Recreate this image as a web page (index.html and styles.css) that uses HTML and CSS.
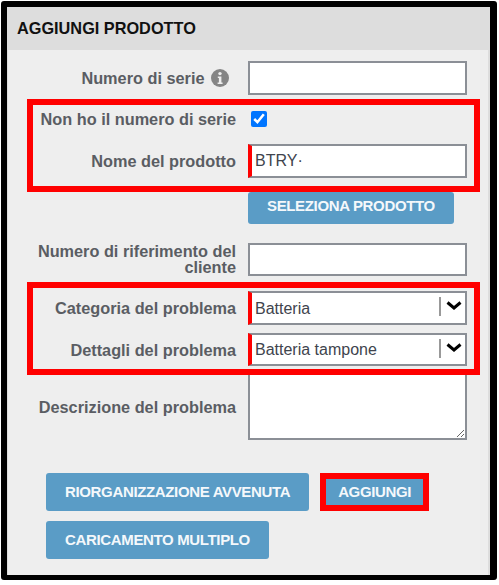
FILE: index.html
```html
<!DOCTYPE html>
<html lang="en">
<head>
    <meta charset="UTF-8">
    <title>Aggiungi prodotto</title>
    <link rel="stylesheet" href="styles.css">
</head>
<body>
    <div class="frame">
        <div class="panel">
            <h3 class="panel-title">AGGIUNGI PRODOTTO</h3>
            <form class="product-form">
                <div class="row">
                    <label class="row-label">
                        Numero di serie
                        <svg class="info-icon" viewBox="0 0 18 18" width="18" height="18">
                            <circle cx="9" cy="9" r="9" fill="#858585"/>
                            <circle cx="9" cy="4.6" r="1.7" fill="#eee"/>
                            <path d="M6.8 7.4h3.6v6.2h1.2v1.5H6.6v-1.5h1.3V8.9H6.8z" fill="#eee"/>
                        </svg>
                    </label>
                    <input class="text-input" type="text">
                </div>

                <div class="highlight highlight-top">
                    <div class="row row-check">
                        <label class="row-label">Non ho il numero di serie</label>
                        <input class="check" type="checkbox" checked>
                    </div>
                    <div class="row">
                        <label class="row-label">Nome del prodotto</label>
                        <input class="text-input required" type="text" value="BTRY·">
                    </div>
                </div>

                <div class="row">
                    <span></span>
                    <div class="field-btn"><button type="button" class="btn">SELEZIONA PRODOTTO</button></div>
                </div>

                <div class="row row-ref">
                    <label class="row-label">Numero di riferimento del cliente</label>
                    <input class="text-input" type="text">
                </div>

                <div class="highlight highlight-problem">
                    <div class="row">
                        <label class="row-label">Categoria del problema</label>
                        <div class="select-box">
                            <select class="select required">
                                <option>Batteria</option>
                            </select>
                            <svg class="chevron" viewBox="0 0 16 9" width="16" height="9">
                                <path d="M1.5 1.5 8 7l6.5-5.5" fill="none" stroke="#000" stroke-width="3"/>
                            </svg>
                        </div>
                    </div>
                    <div class="row row-detail">
                        <label class="row-label">Dettagli del problema</label>
                        <div class="select-box">
                            <select class="select required">
                                <option>Batteria tampone</option>
                            </select>
                            <svg class="chevron" viewBox="0 0 16 9" width="16" height="9">
                                <path d="M1.5 1.5 8 7l6.5-5.5" fill="none" stroke="#000" stroke-width="3"/>
                            </svg>
                        </div>
                    </div>
                </div>

                <div class="row row-desc">
                    <label class="row-label">Descrizione del problema</label>
                    <textarea class="text-area"></textarea>
                </div>

                <div class="actions">
                    <button type="button" class="btn btn-large">RIORGANIZZAZIONE AVVENUTA</button>
                    <button type="button" class="btn btn-large btn-marked">AGGIUNGI</button>
                    <button type="button" class="btn btn-large">CARICAMENTO MULTIPLO</button>
                </div>
            </form>
        </div>
    </div>
</body>
</html>
```

FILE: styles.css
```css
body {
    margin: 0;
    background-color: #fff;
    font-family: "Liberation Sans", Arial, sans-serif;
}
.frame {
    width: 496px;
    box-sizing: border-box;
    margin: 1px 0 0 1px;
    border: solid #000;
    border-width: 6px 7px 5px 6px;
    border-radius: 3px;
}
.panel {
    background-color: #eee;
    border: solid #ddd;
    border-width: 1px 2px 0 1px;
}
.panel-title {
    margin: 0;
    height: 42px;
    padding-left: 9px;
    background-color: #ddd;
    color: #111;
    font-size: 16.3px;
    line-height: 41px;
}
.product-form {
    padding: 11px 21px 16px 19px;
}
.row {
    display: grid;
    grid-template-columns: 1fr 219px;
    column-gap: 12px;
    align-items: center;
}
.row-label {
    color: #5a5d63;
    font-size: 16.3px;
    font-weight: bold;
    line-height: 16px;
    text-align: right;
}
.info-icon {
    margin: 0 7px 0 2px;
    vertical-align: -3px;
}
.text-input, .select, .text-area {
    box-sizing: border-box;
    width: 100%;
    margin: 0;
    background-color: #fff;
    border: 2px solid #8b8f96;
    border-radius: 0;
    color: #40444d;
    font-family: inherit;
    font-size: 16px;
    outline: none;
}
.text-input, .select {
    height: 34px;
    padding: 0 5px;
}
.text-input.required, .select.required {
    border-left: 4px solid #f00;
    padding-left: 3px;
}
.text-area {
    height: 67px;
    display: block;
}
.highlight {
    position: relative;
    z-index: 1;
    margin-right: -13px;
    padding-right: 7px;
    border: 6px solid #f00;
}
.highlight-top {
    margin-top: 4px;
    padding-bottom: 8px;
}
.highlight-problem {
    margin-top: 6px;
    padding-top: 3px;
    padding-bottom: 3px;
}
.row-check {
    height: 28px;
    margin-bottom: 11px;
}
.check {
    width: 16px;
    height: 16px;
    margin: 0 0 0 3px;
    accent-color: #0075ff;
}
.row-ref {
    grid-template-rows: 33px;
    margin-top: 19px;
}
.row-ref .row-label {
    padding-bottom: 1px;
}
.row-ref .text-input, .row-detail .select {
    height: 33px;
}
.row-detail {
    margin-top: 8px;
}
.row-desc {
    margin-top: -2px;
}
.select-box {
    position: relative;
}
.select {
    appearance: none;
    display: block;
}
.select-box::after {
    content: "";
    position: absolute;
    left: 191px;
    top: 6px;
    width: 2px;
    height: 19px;
    background-color: #999;
}
.chevron {
    position: absolute;
    left: 198px;
    top: 10px;
    pointer-events: none;
}
.field-btn {
    display: flex;
}
.btn {
    height: 32px;
    padding: 0 19px 6px;
    background-color: #5a9cc6;
    border: none;
    border-radius: 3px;
    color: #f4f8fb;
    font-family: inherit;
    font-size: 15px;
    font-weight: bold;
    letter-spacing: -0.35px;
    cursor: pointer;
}
.btn:hover {
    background-color: #4d8fb9;
}
.btn-large {
    height: 38px;
    padding-bottom: 2px;
}
.btn-marked {
    padding: 0 12px 2px;
    border: 6px solid #f00;
    border-radius: 0;
}
.actions {
    display: flex;
    flex-wrap: wrap;
    gap: 10px 11px;
    margin-top: 33px;
    padding-left: 19px;
}
```
